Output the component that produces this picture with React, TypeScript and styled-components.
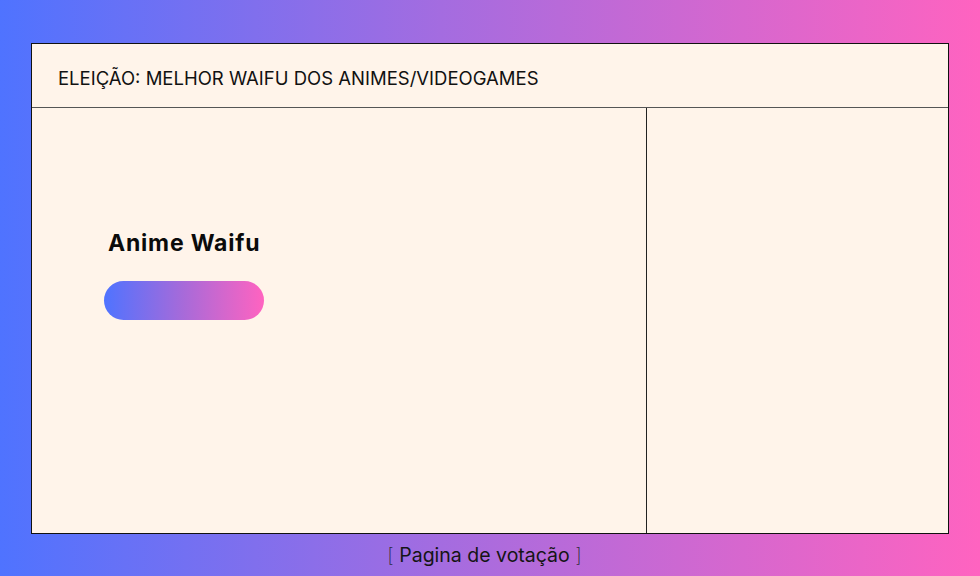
import styled, { createGlobalStyle } from "styled-components";

const GlobalStyle = createGlobalStyle`
  html, body {
    margin: 0;
    padding: 0;
  }
  body {
    font-family: Inter, "Liberation Sans", sans-serif;
  }
`;

const Page = styled.div`
  width: 980px;
  height: 576px;
  box-sizing: border-box;
  background: linear-gradient(90deg, #4f73ff 0%, #a46ce0 45%, #ff63c0 100%);
  padding: 43px 31px 0 31px;
  display: flex;
  flex-direction: column;
  align-items: stretch;
`;

const Panel = styled.div`
  height: 491px;
  box-sizing: border-box;
  background: #fff4ea;
  border: 1px solid #111;
  display: flex;
  flex-direction: column;
`;

const Header = styled.div`
  height: 64px;
  box-sizing: border-box;
  border-bottom: 1px solid #555;
  display: flex;
  align-items: center;
  padding: 5px 0 0 26px;
  font-size: 18.5px;
  color: #111;
  letter-spacing: 0;
`;

const Body = styled.div`
  flex: 1;
  display: flex;
`;

const Main = styled.div`
  width: 615px;
  border-right: 1px solid #222;
  padding: 122px 0 0 72px;
  box-sizing: border-box;
  display: flex;
  flex-direction: column;
  align-items: flex-start;
`;

const Side = styled.div`
  flex: 1;
`;

const Title = styled.h2`
  margin: 0 0 0 4px;
  font-size: 23px;
  font-weight: 700;
  color: #0b0b0b;
  letter-spacing: 0.8px;
  line-height: 26px;
`;

const Bar = styled.div`
  margin-top: 25px;
  width: 160px;
  height: 39px;
  border-radius: 20px;
  background: linear-gradient(90deg, #4f73ff 0%, #a86ad9 50%, #ff63c0 100%);
`;

const Caption = styled.div`
  height: 42px;
  display: flex;
  align-items: center;
  justify-content: center;
  padding-right: 11px;
  font-size: 19.5px;
  color: #151515;
  letter-spacing: 0;
`;

const Bracket = styled.span`
  font-weight: 200;
  color: #2a2a3a;
`;

export default function App() {
  return (
    <>
      <GlobalStyle />
      <Page>
        <Panel>
          <Header>ELEIÇÃO: MELHOR WAIFU DOS ANIMES/VIDEOGAMES</Header>
          <Body>
            <Main>
              <Title>Anime Waifu</Title>
              <Bar />
            </Main>
            <Side />
          </Body>
        </Panel>
        <Caption>
          <Bracket>[</Bracket>&nbsp;Pagina de votação&nbsp;<Bracket>]</Bracket>
        </Caption>
      </Page>
    </>
  );
}
